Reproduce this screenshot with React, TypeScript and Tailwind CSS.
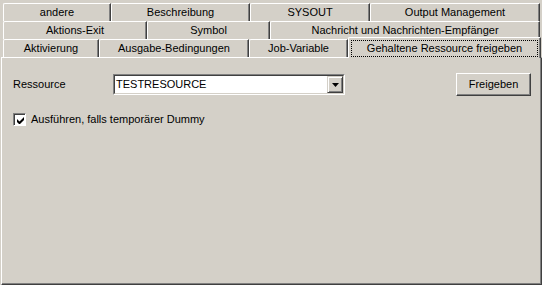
import React from "react";

interface TabProps {
  label: string;
  width: number;
  selected?: boolean;
}

const widthClass: Record<number, string> = {
  108: "w-[108px]",
  139: "w-[139px]",
  120: "w-[120px]",
  170: "w-[170px]",
  144: "w-[144px]",
  123: "w-[123px]",
  270: "w-[270px]",
  96: "w-[96px]",
  150: "w-[150px]",
  99: "w-[99px]",
  193: "w-[193px]",
};

const Tab = ({ label, width, selected }: TabProps) => {
  if (selected) {
    return (
      <div
        className={`${widthClass[width]} relative z-10 -mt-[2px] -mb-[1px] flex h-[21px] items-center justify-center rounded-tl-[2px] border-l border-t border-r border-l-white border-t-white border-r-[#404040] bg-[#d4d0c8] px-[2px] pt-[1px] shadow-[inset_-1px_0_0_#808080]`}
      >
        <div className="flex h-[17px] w-full items-center justify-center border border-dotted border-black">
          {label}
        </div>
      </div>
    );
  }
  return (
    <div
      className={`${widthClass[width]} flex h-[18px] items-center justify-center rounded-tl-[2px] border-l border-t border-r border-l-white border-t-white border-r-[#404040] bg-[#d4d0c8] shadow-[inset_-1px_0_0_#808080]`}
    >
      {label}
    </div>
  );
};

const rows: { label: string; width: number; selected?: boolean }[][] = [
  [
    { label: "andere", width: 108 },
    { label: "Beschreibung", width: 139 },
    { label: "SYSOUT", width: 120 },
    { label: "Output Management", width: 170 },
  ],
  [
    { label: "Aktions-Exit", width: 144 },
    { label: "Symbol", width: 123 },
    { label: "Nachricht und Nachrichten-Empfänger", width: 270 },
  ],
  [
    { label: "Aktivierung", width: 96 },
    { label: "Ausgabe-Bedingungen", width: 150 },
    { label: "Job-Variable", width: 99 },
    { label: "Gehaltene Ressource freigeben", width: 193, selected: true },
  ],
];

const App = () => {
  return (
    <div
      className="flex h-[285px] w-[542px] flex-col bg-[#d4d0c8] text-[11px] leading-none text-black"
      style={{ fontFamily: '"Liberation Sans", Arial, sans-serif' }}
    >
      <div className="flex flex-col pt-[3px] pl-[3px]">
        {rows.map((row, i) => (
          <div key={i} className="flex">
            {row.map((tab) => (
              <Tab key={tab.label} {...tab} />
            ))}
          </div>
        ))}
      </div>

      <div className="ml-[1px] flex flex-1 flex-col border-l border-t border-r border-b border-l-white border-t-white border-r-[#404040] border-b-[#404040] pt-[15px] pl-[11px] shadow-[inset_-1px_-1px_0_#808080]">
        <div className="flex items-center">
          <span className="w-[100px]">Ressource</span>
          <div className="flex h-[21px] w-[232px] border border-t-[#808080] border-l-[#808080] border-r-white border-b-white">
            <div className="flex flex-1 items-center border border-t-[#404040] border-l-[#404040] border-r-[#d4d0c8] border-b-[#d4d0c8] bg-white pl-[1px]">
              <span className="flex-1">TESTRESOURCE</span>
              <div className="flex h-[17px] w-[16px] items-center justify-center border border-t-[#d4d0c8] border-l-[#d4d0c8] border-r-[#404040] border-b-[#404040] bg-[#d4d0c8] shadow-[inset_1px_1px_0_white,inset_-1px_-1px_0_#808080]">
                <svg width="7" height="4" viewBox="0 0 7 4">
                  <path d="M0 0h7L3.5 4z" fill="black" />
                </svg>
              </div>
            </div>
          </div>
          <div className="ml-[111px] flex h-[23px] w-[75px] items-center justify-center border border-t-white border-l-white border-r-[#404040] border-b-[#404040] shadow-[inset_-1px_-1px_0_#808080]">
            Freigeben
          </div>
        </div>

        <div className="mt-[17px] flex items-center">
          <div className="flex h-[13px] w-[13px] items-center justify-center border border-t-[#808080] border-l-[#808080] border-r-white border-b-white bg-white shadow-[inset_1px_1px_0_#404040]">
            <svg width="7" height="7" viewBox="0 0 7 7" className="ml-[1px] mt-[1px]">
              <path d="M0 2v3l2 2h1l4-4V0L2.5 4.5z" fill="black" />
            </svg>
          </div>
          <span className="ml-[5px]">Ausführen, falls temporärer Dummy</span>
        </div>
      </div>
    </div>
  );
};

export default App;
